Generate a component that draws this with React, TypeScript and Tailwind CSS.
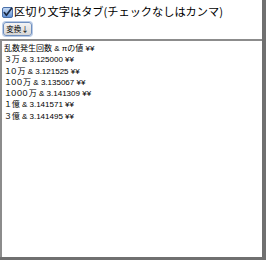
import React from 'react';

const lines: [string, string][] = [
  ['', '乱数発生回数 & πの値 ¥¥'],
  ['３', '万 & 3.125000 ¥¥'],
  ['１０', '万 & 3.121525 ¥¥'],
  ['１００', '万 & 3.135067 ¥¥'],
  ['１０００', '万 & 3.141309 ¥¥'],
  ['１', '億 & 3.141571 ¥¥'],
  ['３', '億 & 3.141495 ¥¥'],
];

const CheckBox: React.FC = () => (
  <svg width="11" height="11" viewBox="0 0 11 11" className="shrink-0">
    <defs>
      <linearGradient id="cb" x1="0" y1="0" x2="0" y2="1">
        <stop offset="0" stopColor="#c9dcf5" />
        <stop offset="1" stopColor="#5d8fd6" />
      </linearGradient>
    </defs>
    <rect x="0.5" y="0.5" width="10" height="10" rx="1.5" fill="url(#cb)" stroke="#4a6fa8" />
    <path d="M2.3 5.6 L4.4 8.3 L9.6 1.2" fill="none" stroke="#1b2a44" strokeWidth="1.7" strokeLinecap="round" strokeLinejoin="round" />
  </svg>
);

export default function App() {
  return (
    <div
      className="w-[266px] h-[260px] flex flex-col bg-white border-r-4 border-b-[3px] border-[#707070]"
      style={{ fontFamily: '"Noto Sans CJK JP", "Liberation Sans", sans-serif' }}
    >
      <label className="flex items-center gap-[1px] pl-[2px] pt-[6px] h-[18px] text-[11.2px] leading-none text-black">
        <CheckBox />
        <span>区切り文字はタブ(チェックなしはカンマ)</span>
      </label>
      <div className="pl-[3px] pt-[4px] pb-[3px]">
        <button
          type="button"
          className="h-[14px] w-[29px] flex items-center justify-center rounded-[3px] border border-[#6f8fbf] bg-gradient-to-b from-[#f4f4f4] to-[#d6d6d6] text-[7.5px] leading-none text-black shadow-[0_0_0_1px_#b9cbe6]"
        >
          変換↓
        </button>
      </div>
      <div
        className="flex-1 border-t-2 border-l-2 border-[#8c8c8c] bg-white pl-[2px] pt-[2px] text-[8px] leading-[11.3px] text-black"
        style={{ fontFamily: '"Liberation Sans", "Noto Sans CJK JP", sans-serif' }}
      >
        {lines.map(([num, rest]) => (
          <div key={num + rest} className="whitespace-pre">
            {num && <span className="tracking-[-2.3px] pr-[2px]">{num}</span>}
            {rest}
          </div>
        ))}
      </div>
    </div>
  );
}
